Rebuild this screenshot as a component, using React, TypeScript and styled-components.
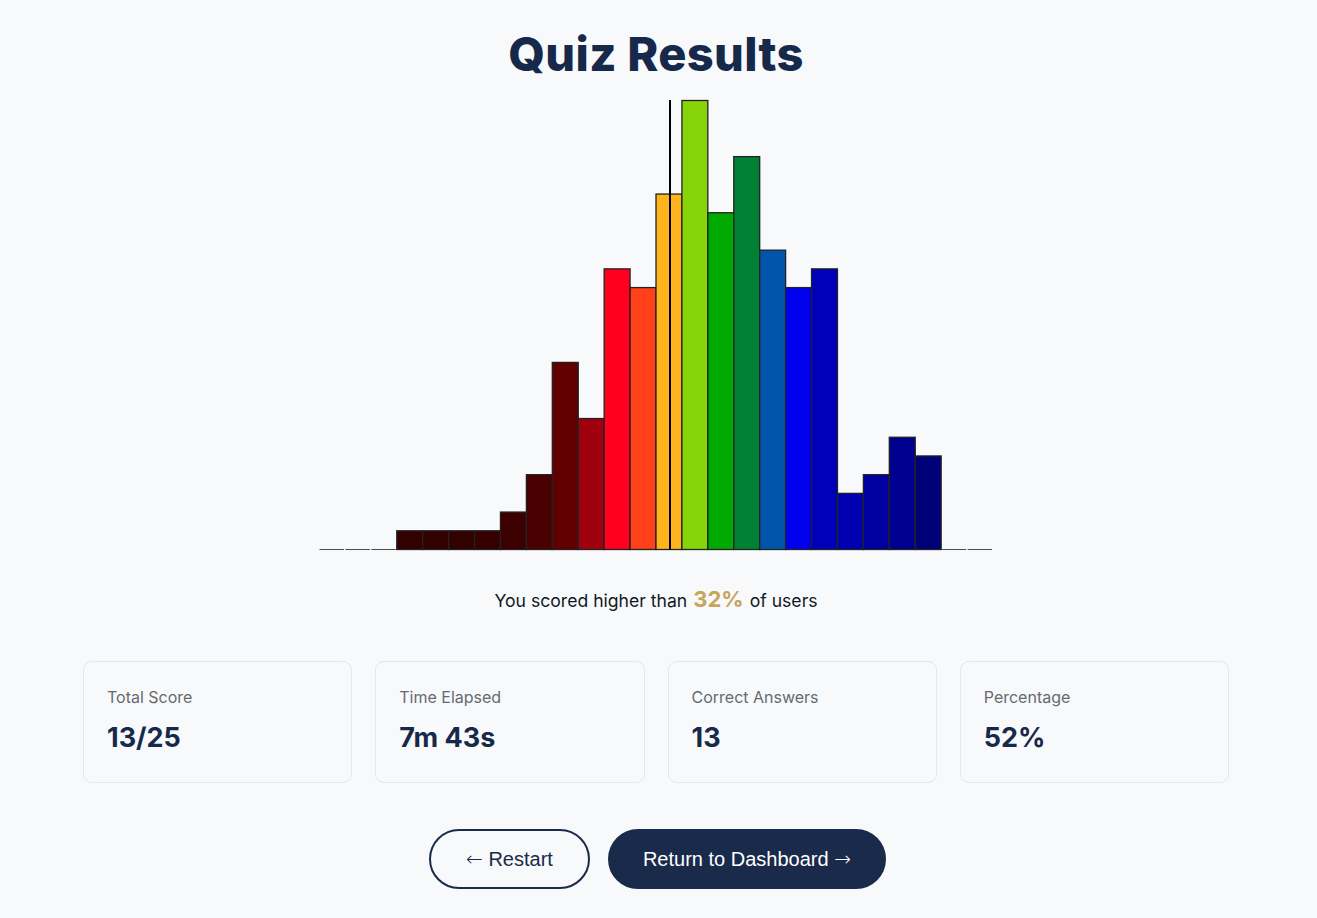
import React from "react";
import styled, { createGlobalStyle } from "styled-components";

const GlobalStyle = createGlobalStyle`
  body {
    margin: 0;
    background: #f7f9fb;
    font-family: "Inter", "Liberation Sans", sans-serif;
  }
`;

const Page = styled.main`
  display: flex;
  flex-direction: column;
  align-items: center;
  padding: 26px 85px 30px 80px;
  box-sizing: border-box;
  min-height: 100vh;
`;

const Title = styled.h1`
  margin: 0;
  font-family: "Inter", sans-serif;
  font-weight: 800;
  font-size: 47px;
  line-height: 56px;
  color: #17294a;
  letter-spacing: 0.3px;
`;

const ChartWrap = styled.div`
  margin-top: 17px;
  width: 676px;
  height: 452px;
`;

const Percentile = styled.p`
  margin: 35px 0 0;
  font-size: 17.6px;
  color: #111827;
  display: flex;
  align-items: baseline;
  gap: 6px;
`;

const Highlight = styled.span`
  color: #c9a45c;
  font-weight: 700;
  font-size: 22px;
`;

const Stats = styled.section`
  margin-top: 49px;
  width: 100%;
  max-width: 1146px;
  display: grid;
  grid-template-columns: repeat(4, 1fr);
  gap: 23px;
`;

const Card = styled.div`
  border: 1px solid #e4e7eb;
  border-radius: 9px;
  padding: 25px 23px;
  height: 122px;
  box-sizing: border-box;
  background: #f7f9fb;
`;

const Label = styled.div`
  font-size: 16px;
  color: #666a70;
  line-height: 20px;
`;

const Value = styled.div`
  margin-top: 14px;
  font-size: 27px;
  font-weight: 700;
  color: #17294a;
  line-height: 34px;
`;

const Actions = styled.div`
  margin-top: 46px;
  display: flex;
  gap: 18px;
  padding-left: 3px;
`;

const Button = styled.button<{ $primary?: boolean }>`
  font-family: "Liberation Sans", Arial, sans-serif;
  font-size: 20px;
  height: 60px;
  padding: 0 ${(p) => (p.$primary ? "33px" : "35px")};
  border-radius: 30px;
  border: 2px solid #1a2a4a;
  background: ${(p) => (p.$primary ? "#1a2a4a" : "transparent")};
  color: ${(p) => (p.$primary ? "#ffffff" : "#1a2a4a")};
  cursor: pointer;
`;

const Arrow = styled.span`
  font-family: "DejaVu Sans", sans-serif;
  font-weight: 200;
  font-size: 20px;
`;

const bins: { v: number; c: string }[] = [
  { v: 0, c: "#555" },
  { v: 0, c: "#555" },
  { v: 0, c: "#555" },
  { v: 1, c: "#330000" },
  { v: 1, c: "#330000" },
  { v: 1, c: "#330000" },
  { v: 1, c: "#360000" },
  { v: 2, c: "#3d0000" },
  { v: 4, c: "#4a0000" },
  { v: 10, c: "#600000" },
  { v: 7, c: "#a0000d" },
  { v: 15, c: "#ff0020" },
  { v: 14, c: "#ff4018" },
  { v: 19, c: "#ffb41e" },
  { v: 24, c: "#88d40a" },
  { v: 18, c: "#00aa00" },
  { v: 21, c: "#008035" },
  { v: 16, c: "#0055aa" },
  { v: 14, c: "#0000ee" },
  { v: 15, c: "#0000bb" },
  { v: 3, c: "#0000b0" },
  { v: 4, c: "#0000a0" },
  { v: 6, c: "#000090" },
  { v: 5, c: "#000078" },
  { v: 0, c: "#555" },
  { v: 0, c: "#555" },
];

const Histogram = () => {
  const w = 674 / bins.length;
  const base = 450.5;
  const unit = 449 / 24;
  return (
    <svg width="676" height="452" viewBox="0 0 676 452">
      {bins.map((b, i) => {
        const h = b.v * unit;
        if (b.v === 0) {
          return (
            <line
              key={i}
              x1={1.5 + i * w}
              x2={i * w + w}
              y1={base}
              y2={base}
              stroke="#4a4a4a"
              strokeWidth="1"
            />
          );
        }
        return (
          <rect
            key={i}
            x={1 + i * w}
            y={base - h}
            width={w}
            height={h}
            fill={b.c}
            stroke="#222"
            strokeWidth="1.3"
          />
        );
      })}
      <line x1="352" y1="1" x2="352" y2={base} stroke="#000" strokeWidth="2" />
    </svg>
  );
};

const stats = [
  { label: "Total Score", value: "13/25" },
  { label: "Time Elapsed", value: "7m 43s" },
  { label: "Correct Answers", value: "13" },
  { label: "Percentage", value: "52%" },
];

export default function App() {
  return (
    <>
      <GlobalStyle />
      <Page>
        <Title>Quiz Results</Title>
        <ChartWrap>
          <Histogram />
        </ChartWrap>
        <Percentile>
          You scored higher than <Highlight>32%</Highlight> of users
        </Percentile>
        <Stats>
          {stats.map((s) => (
            <Card key={s.label}>
              <Label>{s.label}</Label>
              <Value>{s.value}</Value>
            </Card>
          ))}
        </Stats>
        <Actions>
          <Button>
            <Arrow>←</Arrow> Restart
          </Button>
          <Button $primary>
            Return to Dashboard <Arrow>→</Arrow>
          </Button>
        </Actions>
      </Page>
    </>
  );
}
